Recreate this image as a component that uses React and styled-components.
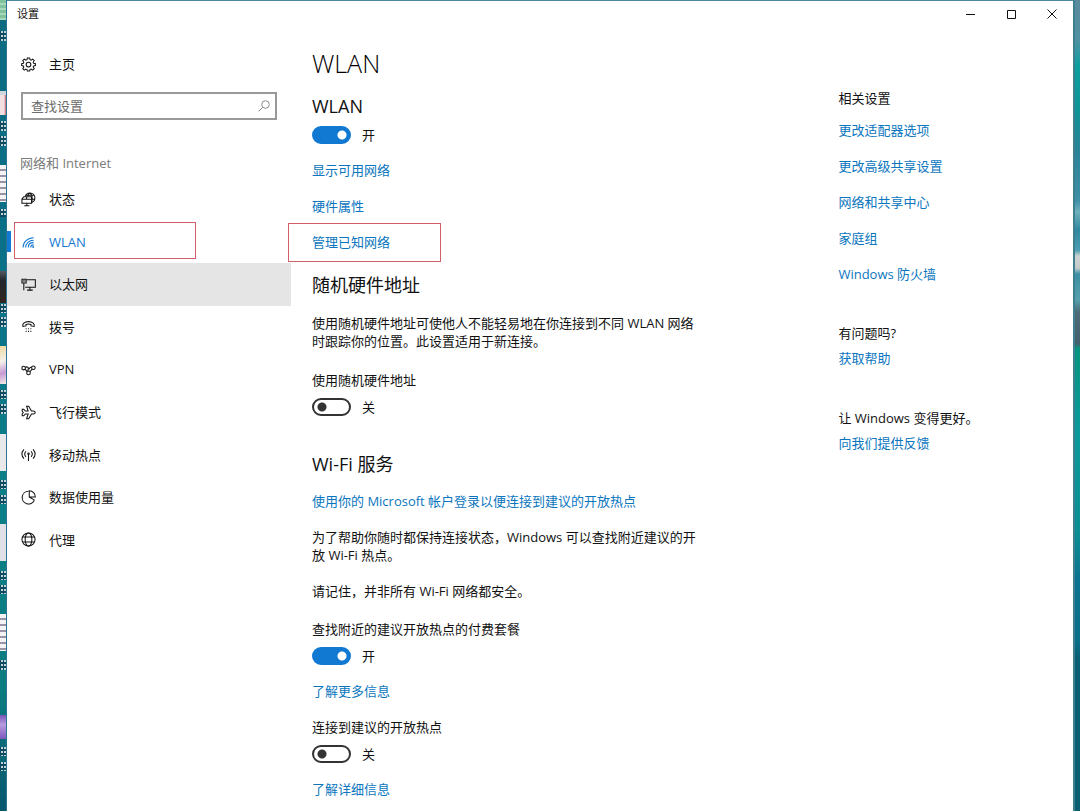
import React from "react";
import styled, { createGlobalStyle, css } from "styled-components";

const ACCENT = "#1179d2";
const LINK = "#0b76be";

const Global = createGlobalStyle`
  * { box-sizing: border-box; }
  html, body { margin: 0; background: #0a6f84; }
  body, input, button {
    font-family: "Open Sans", "Noto Sans CJK SC", sans-serif;
    font-size: 13px;
    line-height: 18px;
    color: #111;
  }
  h1, h2, h3, p, ul { margin: 0; padding: 0; font-weight: 400; }
  ul { list-style: none; }
`;

const Desktop = styled.div`
  display: grid;
  grid-template-columns: 7px minmax(0, 1fr) 7px;
  min-height: 100vh;
`;

const IconStrip = styled.div`
  overflow: hidden;
  border-right: 1px solid #2d7390;
  background: linear-gradient(#0c6a80, #0a7088 30%, #0b7f87 60%, #0b7c80 85%, #08566e);
`;

const Slice = styled.div`
  height: ${(p) => p.$h}px;
  background: ${(p) => p.$bg || "transparent"};
`;

const Wallpaper = styled.div`
  border-left: 2px solid #3f7f90;
  background: linear-gradient(
    #5c8a9c 0, #4f92a2 40px, #0b9fa0 66px, #0d9496 110px, #2b8398 150px, #3f8fa6 200px,
    #6fb0bd 212px, #2f87a0 230px, #4b9db0 250px, #ccd3d2 256px, #c4cccb 268px, #3d8fa4 274px,
    #57a0ac 300px, #4d6b78 312px, #42616c 344px, #06947f 348px, #0b9a9b 430px, #0c8f93 530px,
    #0b7390 580px, #0b6f88 640px, #0a5f74 660px, #0a6070 100%
  );
`;

const Window = styled.div`
  display: grid;
  grid-template-columns: 284px minmax(0, 7fr) minmax(0, 3fr);
  grid-template-rows: 26px 1fr;
  border-top: 1px solid #4f86a0;
  background: #fff;
`;

const TitleBar = styled.header`
  grid-column: 1 / -1;
  display: flex;
  justify-content: space-between;
  align-items: center;
  padding-left: 10px;
  font-size: 11px;
`;

const Caption = styled.div`
  display: flex;
`;

const CaptionButton = styled.button`
  display: flex;
  align-items: center;
  justify-content: center;
  width: 41px;
  height: 26px;
  padding: 0;
  border: 0;
  background: none;
`;

const Sidebar = styled.aside`
  padding-top: 21px;
`;

const NavLink = styled.a`
  position: relative;
  display: flex;
  align-items: center;
  gap: 13px;
  min-height: 32px;
  padding-left: 14px;
  color: ${(p) => (p.$current ? ACCENT : "#111")};
  background: ${(p) => (p.$hover ? "#e5e5e5" : "transparent")};
  text-decoration: none;
  ${(p) =>
    p.$current &&
    css`
      &::before {
        content: "";
        position: absolute;
        left: 0;
        top: 10px;
        width: 4px;
        height: 21px;
        background: ${ACCENT};
      }
    `}
`;

const Search = styled.label`
  display: flex;
  align-items: center;
  height: 28px;
  margin: 12px 14px 0;
  padding: 0 5px 0 8px;
  border: 2px solid #999;
`;

const SearchInput = styled.input`
  flex: 1;
  min-width: 0;
  padding: 0;
  border: 0;
  outline: 0;
  background: none;
  &::placeholder { color: #6b6b6b; opacity: 1; }
`;

const GroupTitle = styled.h3`
  margin: 34px 0 6px 13px;
  font-size: 13px;
  color: #7b7b7b;
`;

const NavList = styled.ul`
  display: grid;
  grid-auto-rows: 1fr;
  min-height: 383px;
`;

const NavItem = styled.li`
  display: grid;
`;

const Marker = styled.span`
  position: absolute;
  inset: ${(p) => p.$inset};
  width: ${(p) => p.$w}px;
  border: 1px solid #cf5f6b;
  pointer-events: none;
`;

const Main = styled.main`
  padding: 21px 12px 12px 21px;
`;

const PageTitle = styled.h1`
  font-size: 25px;
  line-height: 30px;
  font-weight: 300;
  color: #000;
`;

const Heading = styled.h2`
  margin-top: ${(p) => p.$gap}px;
  font-size: 18px;
  line-height: 24px;
`;

const Text = styled.p`
  max-width: 390px;
  margin-top: ${(p) => p.$gap}px;
`;

const ToggleLabel = styled.label`
  display: block;
  margin-top: ${(p) => p.$gap}px;
`;

const ToggleRow = styled.div`
  display: flex;
  align-items: center;
  gap: 11px;
  height: 20px;
  margin-top: ${(p) => p.$gap}px;
`;

const Switch = styled.input`
  appearance: none;
  width: 39px;
  height: 18px;
  margin: 0;
  border: 2px solid #333;
  border-radius: 9px;
  background: radial-gradient(circle at 8px 7px, #333 4px, transparent 5px);
  &:checked {
    border-color: ${ACCENT};
    background: radial-gradient(circle at 28px 7px, #fff 4px, ${ACCENT} 5px);
  }
`;

const Link = styled.a`
  position: relative;
  color: ${LINK};
  text-decoration: none;
`;

const LinkBlock = styled.div`
  display: flex;
  flex-direction: column;
  align-items: flex-start;
  gap: 18px;
  margin-top: ${(p) => p.$gap}px;
`;

const Related = styled.aside`
  padding-top: 62px;
`;

const RelatedTitle = styled.h3`
  margin-top: ${(p) => p.$gap || 0}px;
  font-size: 13px;
`;

const Icon = ({ children, size = 15 }) => (
  <svg width={size} height={size} viewBox="0 0 16 16" fill="none" stroke="currentColor" strokeWidth="1.1" aria-hidden="true">
    {children}
  </svg>
);

const icons = {
  gear: (
    <>
      <path d="M6.8 1h2.4l.4 1.9 1.2.5 1.7-1.1 1.6 1.6L13 5.600l.5 1.200 1.900.4v1.900l-1.900.4-.5 1.200 1.100 1.700-1.600 1.600-1.700-1.100-1.200.5L9.200 15H6.800l-.4-1.600-1.200-.5-1.700 1.100-1.600-1.600L3 10.700l-.5-1.200L.7 9.100V7.200l1.800-.4.5-1.200-1.100-1.700 1.600-1.600 1.700 1.100 1.200-.5z" />
      <circle cx="8" cy="8.100" r="2.500" />
    </>
  ),
  status: (
    <>
      <path d="M4.500 4.500C5.300 2.400 7.200 1 9.500 1c3 0 5.300 2.300 5.300 5.200 0 2.400-1.400 4.300-3.300 5M9.500 1c-1.300.9-2 2.100-2.300 3.500M9.500 1c2.100 1.700 2.800 5.500 2 9M5.500 3.500h8.300M11.500 7.800h3" />
      <path d="M3 5h8.300v7H1V7.500zM1 7.800h10.300M6 5v3M3.500 14.600h5.500M6.200 12v2.500" />
    </>
  ),
  wlan: (
    <>
      <path d="M2.200 14.500C2.200 8.500 7 4 13.500 4M5 14.500c0-4.700 3.600-7.800 8.500-7.800M7.700 14.500c0-3.200 2.400-5.300 5.800-5.300M10.300 14.500c0-1.700 1.300-2.900 3.200-2.900" />
      <circle cx="13" cy="13.900" r="1" fill="currentColor" stroke="none" />
    </>
  ),
  ethernet: (
    <>
      <path d="M6 3h9.300v8H4.500M9.500 11v3M6.500 14h6M3 6.500V14" />
      <path d="M1 2.500h4.500v4H1z" />
      <path d="M2.300 3.500v1.500M4.200 3.500v1.500" />
    </>
  ),
  dial: (
    <>
      <path d="M2 8C1 5.200 3.800 2.800 8 2.800s7 2.400 6 5.200l-3.300-.6V5.900c-1.700-.6-3.700-.6-5.400 0v1.500z" />
      <path d="M5 10.500h1M7.500 10.500h1M10 10.500h1M5 13.200h1M7.500 13.200h1M10 13.200h1" />
    </>
  ),
  vpn: (
    <>
      <circle cx="2.800" cy="6.500" r="1.900" />
      <circle cx="13.200" cy="6.200" r="1.900" />
      <circle cx="8" cy="11.600" r="1.900" />
      <path d="M4.700 6.100c1.500-1.600 3.400-.8 3.100.9L7.200 9.700M4.400 7.600l2.200 2.600M11.300 5.700c-1.700-.2-2.700.8-2.500 2.200M9.400 10.400l2.600-2.700" />
    </>
  ),
  plane: (
    <path d="M1.300 4.500h1.600L4.600 6.400h3L6 1.300h2.200l3 5.100h1.700c3 0 3 3.200 0 3.200h-1.700l-3 5.100H6l1.600-5.100h-3l-1.700 1.900H1.300V9.600L2.400 8 1.300 6.400z" />
  ),
  hotspot: (
    <>
      <path d="M3.200 2.500c-2.700 3-2.700 7 0 10M5.300 4.500c-1.600 1.800-1.600 4.300 0 6M12.800 2.500c2.700 3 2.700 7 0 10M10.700 4.500c1.600 1.800 1.600 4.300 0 6M8 8v7" />
      <circle cx="8" cy="7.300" r=".8" />
    </>
  ),
  usage: (
    <>
      <path d="M8 1.300A6.800 6.800 0 1 0 14.200 11" />
      <path d="M8.800.9v6.600h6.500C15.300 3.800 12.500.9 8.800.9zM8.800 7.500l5.600 3.300" />
    </>
  ),
  globe: (
    <>
      <circle cx="8" cy="8" r="7" />
      <ellipse cx="8" cy="8" rx="3.600" ry="7" />
      <path d="M1.700 5.300h12.600M1.700 10.700h12.600" />
    </>
  ),
};

const navItems = [
  { icon: "status", label: "状态" },
  { icon: "wlan", label: "WLAN", current: true },
  { icon: "ethernet", label: "以太网", hover: true },
  { icon: "dial", label: "拨号" },
  { icon: "vpn", label: "VPN" },
  { icon: "plane", label: "飞行模式" },
  { icon: "hotspot", label: "移动热点" },
  { icon: "usage", label: "数据使用量" },
  { icon: "globe", label: "代理" },
];

const stripes = "repeating-linear-gradient(#f4f4f6 0 4px, #9a93a5 4px 6px)";
const caption =
  "repeating-linear-gradient(transparent 0 2px, #0b4a5f 2px 4px), repeating-linear-gradient(90deg, #0b4a5f 0 1px, #c3d3d9 1px 3px)";

const desktopSlices = [
  [20, "repeating-linear-gradient(#7fc29b 0 3px, #a9d8bb 3px 5px)"],
  [11],
  [10, caption],
  [50],
  [4, "#cfd6dc"],
  [20, "linear-gradient(90deg, #f1dfe2 4px, #c4606c)"],
  [6],
  [10, caption],
  [5],
  [10, caption],
  [19],
  [37, stripes],
  [7],
  [8, caption],
  [54],
  [32, "linear-gradient(#555a60, #22262b 30%, #33251f)"],
  [1],
  [9, caption],
  [4],
  [10, caption],
  [19],
  [38, "linear-gradient(160deg, #f0d9a0, #f4f1ea 40%, #c79ad4 70%, #f3ece6)"],
  [6],
  [9, caption],
  [5],
  [10, caption],
  [20],
  [37, "#e9e9ec"],
  [9],
  [9, caption],
  [6],
  [9, caption],
  [20],
  [37, "#dfe1e6"],
  [10],
  [9, caption],
  [5],
  [9, caption],
  [20],
  [37, stripes],
  [9],
  [10, caption],
  [45],
  [24, "linear-gradient(#7a55b5, #b89be0 40%, #7d58bd)"],
  [8],
  [9, caption],
  [6],
  [9, caption],
];

function Toggle({ id, on, label, gap }) {
  return (
    <ToggleRow $gap={gap}>
      <Switch type="checkbox" role="switch" id={id} defaultChecked={on} aria-label={label} />
      <span>{on ? "开" : "关"}</span>
    </ToggleRow>
  );
}

export default function App() {
  return (
    <>
      <Global />
      <Desktop>
        <IconStrip aria-hidden="true">
          {desktopSlices.map(([h, bg], i) => (
            <Slice key={i} $h={h} $bg={bg} />
          ))}
        </IconStrip>
        <Window>
          <TitleBar>
            <span>设置</span>
            <Caption>
              <CaptionButton aria-label="最小化">
                <svg width="10" height="10" stroke="#111"><path d="M1 5.500h9" /></svg>
              </CaptionButton>
              <CaptionButton aria-label="最大化">
                <svg width="10" height="10" fill="none" stroke="#111"><path d="M1.500 1.500h8v8h-8z" /></svg>
              </CaptionButton>
              <CaptionButton aria-label="关闭">
                <svg width="10" height="10" stroke="#111"><path d="M.5.500l9 9M9.500.500l-9 9" /></svg>
              </CaptionButton>
            </Caption>
          </TitleBar>

          <Sidebar>
            <NavLink href="#home">
              <Icon>{icons.gear}</Icon>
              <span>主页</span>
            </NavLink>
            <Search>
              <SearchInput type="text" placeholder="查找设置" aria-label="查找设置" />
              <svg width="12" height="12" fill="none" stroke="#8a8a8a" aria-hidden="true">
                <circle cx="7.500" cy="4.500" r="3.800" />
                <path d="M4.800 7.200L.6 11.400" />
              </svg>
            </Search>
            <GroupTitle>网络和 Internet</GroupTitle>
            <nav>
              <NavList>
                {navItems.map((n) => (
                  <NavItem key={n.label}>
                    <NavLink href={`#${n.icon}`} $current={n.current} $hover={n.hover} aria-current={n.current ? "page" : undefined}>
                      <Icon>{icons[n.icon]}</Icon>
                      <span>{n.label}</span>
                      {n.current && <Marker $inset="1px auto 4px 7px" $w={182} />}
                    </NavLink>
                  </NavItem>
                ))}
              </NavList>
            </nav>
          </Sidebar>

          <Main>
            <PageTitle>WLAN</PageTitle>
            <Heading $gap={16}>WLAN</Heading>
            <Toggle id="wlan-on" on label="WLAN" gap={7} />
            <LinkBlock $gap={16}>
              <Link href="#available">显示可用网络</Link>
              <Link href="#hardware">硬件属性</Link>
              <Link href="#known">
                管理已知网络
                <Marker $inset="-10px auto -11px -24px" $w={153} />
              </Link>
            </LinkBlock>

            <Heading $gap={22}>随机硬件地址</Heading>
            <Text $gap={17}>使用随机硬件地址可使他人不能轻易地在你连接到不同 WLAN 网络时跟踪你的位置。此设置适用于新连接。</Text>
            <ToggleLabel htmlFor="random" $gap={21}>使用随机硬件地址</ToggleLabel>
            <Toggle id="random" gap={8} />

            <Heading $gap={35}>Wi-Fi 服务</Heading>
            <LinkBlock $gap={16}>
              <Link href="#account">使用你的 Microsoft 帐户登录以便连接到建议的开放热点</Link>
            </LinkBlock>
            <Text $gap={18}>为了帮助你随时都保持连接状态，Windows 可以查找附近建议的开放 Wi-Fi 热点。</Text>
            <Text $gap={18}>请记住，并非所有 Wi-Fi 网络都安全。</Text>
            <ToggleLabel htmlFor="paid" $gap={20}>查找附近的建议开放热点的付费套餐</ToggleLabel>
            <Toggle id="paid" on gap={8} />
            <LinkBlock $gap={16}>
              <Link href="#more">了解更多信息</Link>
            </LinkBlock>
            <ToggleLabel htmlFor="suggested" $gap={18}>连接到建议的开放热点</ToggleLabel>
            <Toggle id="suggested" gap={8} />
            <LinkBlock $gap={16}>
              <Link href="#details">了解详细信息</Link>
            </LinkBlock>
          </Main>

          <Related>
            <RelatedTitle>相关设置</RelatedTitle>
            <LinkBlock $gap={14}>
              <Link href="#adapter">更改适配器选项</Link>
              <Link href="#sharing">更改高级共享设置</Link>
              <Link href="#center">网络和共享中心</Link>
              <Link href="#homegroup">家庭组</Link>
              <Link href="#firewall">Windows 防火墙</Link>
            </LinkBlock>
            <RelatedTitle $gap={41}>有问题吗?</RelatedTitle>
            <LinkBlock $gap={7}>
              <Link href="#help">获取帮助</Link>
            </LinkBlock>
            <RelatedTitle $gap={42}>让 Windows 变得更好。</RelatedTitle>
            <LinkBlock $gap={7}>
              <Link href="#feedback">向我们提供反馈</Link>
            </LinkBlock>
          </Related>
        </Window>
        <Wallpaper />
      </Desktop>
    </>
  );
}
